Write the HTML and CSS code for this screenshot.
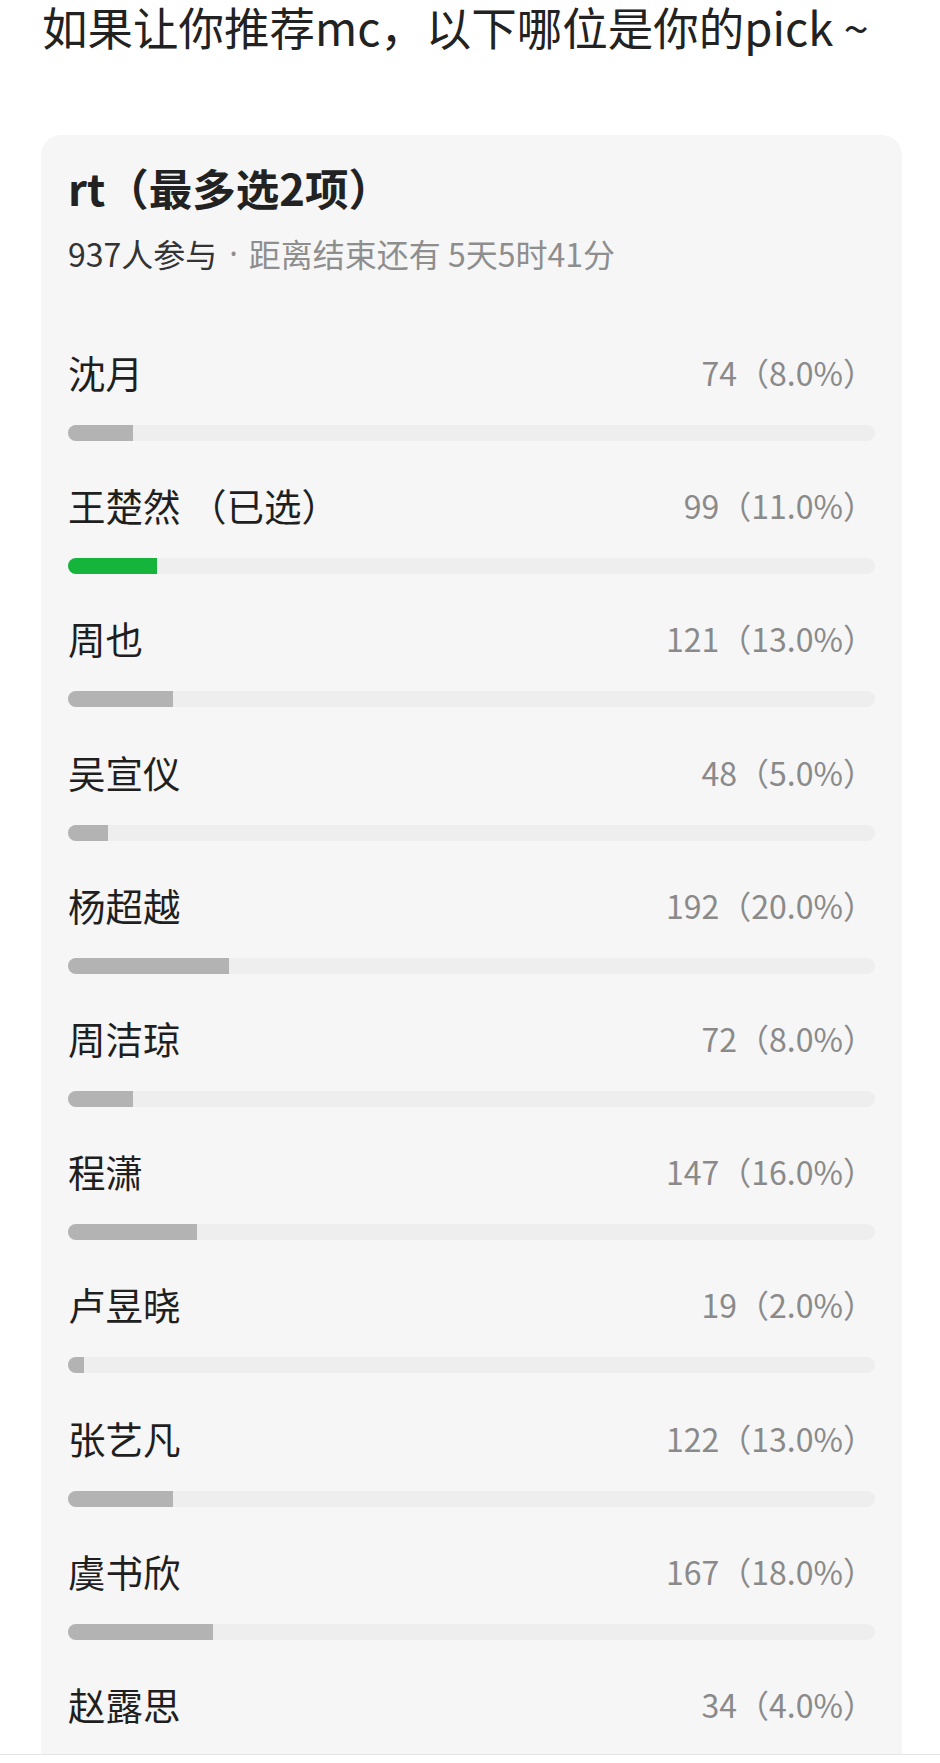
FILE: index.html
```html
<!DOCTYPE html>
<html lang="zh-CN">
<head>
<meta charset="utf-8">
<title>投票</title>
<link rel="stylesheet" href="styles.css">
</head>
<body>
<div class="frame">
  <h1 class="post-text">如果让你推荐mc，以下哪位是你的pick ~</h1>
  <section class="poll">
    <h2 class="poll-title">rt（最多选2项）</h2>
    <p class="poll-meta"><span class="count">937人参与</span><span class="dot">·</span><span class="remain">距离结束还有 5天5时41分</span></p>
    <ul class="options">
      <li class="option">
        <div class="row"><span class="name">沈月</span><span class="votes">74（8.0%）</span></div>
        <div class="track"><div class="fill" style="width:8%"></div></div>
      </li>
      <li class="option">
        <div class="row"><span class="name">王楚然 （已选）</span><span class="votes">99（11.0%）</span></div>
        <div class="track"><div class="fill selected" style="width:11%"></div></div>
      </li>
      <li class="option">
        <div class="row"><span class="name">周也</span><span class="votes">121（13.0%）</span></div>
        <div class="track"><div class="fill" style="width:13%"></div></div>
      </li>
      <li class="option">
        <div class="row"><span class="name">吴宣仪</span><span class="votes">48（5.0%）</span></div>
        <div class="track"><div class="fill" style="width:5%"></div></div>
      </li>
      <li class="option">
        <div class="row"><span class="name">杨超越</span><span class="votes">192（20.0%）</span></div>
        <div class="track"><div class="fill" style="width:20%"></div></div>
      </li>
      <li class="option">
        <div class="row"><span class="name">周洁琼</span><span class="votes">72（8.0%）</span></div>
        <div class="track"><div class="fill" style="width:8%"></div></div>
      </li>
      <li class="option">
        <div class="row"><span class="name">程潇</span><span class="votes">147（16.0%）</span></div>
        <div class="track"><div class="fill" style="width:16%"></div></div>
      </li>
      <li class="option">
        <div class="row"><span class="name">卢昱晓</span><span class="votes">19（2.0%）</span></div>
        <div class="track"><div class="fill" style="width:2%"></div></div>
      </li>
      <li class="option">
        <div class="row"><span class="name">张艺凡</span><span class="votes">122（13.0%）</span></div>
        <div class="track"><div class="fill" style="width:13%"></div></div>
      </li>
      <li class="option">
        <div class="row"><span class="name">虞书欣</span><span class="votes">167（18.0%）</span></div>
        <div class="track"><div class="fill" style="width:18%"></div></div>
      </li>
      <li class="option">
        <div class="row"><span class="name">赵露思</span><span class="votes">34（4.0%）</span></div>
        <div class="track"><div class="fill" style="width:4%"></div></div>
      </li>
    </ul>
  </section>
</div>
</body>
</html>
```
FILE: styles.css
```css
html, body {
  margin: 0;
  padding: 0;
  background: #ffffff;
}

body {
  font-family: "Noto Sans CJK SC", "Noto Sans", sans-serif;
  color: #222222;
}

.frame {
  height: 1754px;
  overflow: hidden;
  border-bottom: 1px solid #e3e3e3;
}

.post-text {
  margin: 0;
  padding-left: 42px;
  font-size: 45.5px;
  line-height: 52px;
  font-weight: 400;
  color: #222222;
  white-space: nowrap;
}

.poll {
  margin: 83px 0 0 41px;
  width: 861px;
  box-sizing: border-box;
  padding: 28px 27px 40px;
  background: #f6f6f6;
  border-radius: 20px 20px 0 0;
}

.poll-title {
  margin: 0;
  font-size: 43.5px;
  line-height: 50px;
  font-weight: 700;
  color: #222222;
}

.poll-meta {
  display: flex;
  align-items: center;
  height: 40px;
  margin: 20px 0 0;
  font-size: 32px;
  line-height: 40px;
  white-space: pre;
}

.poll-meta .count {
  color: #333333;
}

.poll-meta .remain {
  color: #8e8e8e;
}

.poll-meta .dot {
  padding: 0 11px 0 12px;
  font-family: "Noto Sans", "DejaVu Sans", sans-serif;
  color: #8e8e8e;
}

.options {
  list-style: none;
  margin: 75px 0 0;
  padding: 0;
}

.option {
  margin-bottom: 40.2px;
}

.row {
  display: flex;
  justify-content: space-between;
  align-items: center;
  height: 48px;
}

.name {
  font-size: 37.5px;
  line-height: 48px;
  color: #1f1f1f;
}

.votes {
  font-size: 32px;
  line-height: 48px;
  color: #8a8a8a;
}

.track {
  margin-top: 29px;
  height: 16px;
  border-radius: 8px;
  background: #eeeeee;
  overflow: hidden;
}

.fill {
  height: 100%;
  background: #b3b3b3;
}

.fill.selected {
  background: #15b43a;
}
```
